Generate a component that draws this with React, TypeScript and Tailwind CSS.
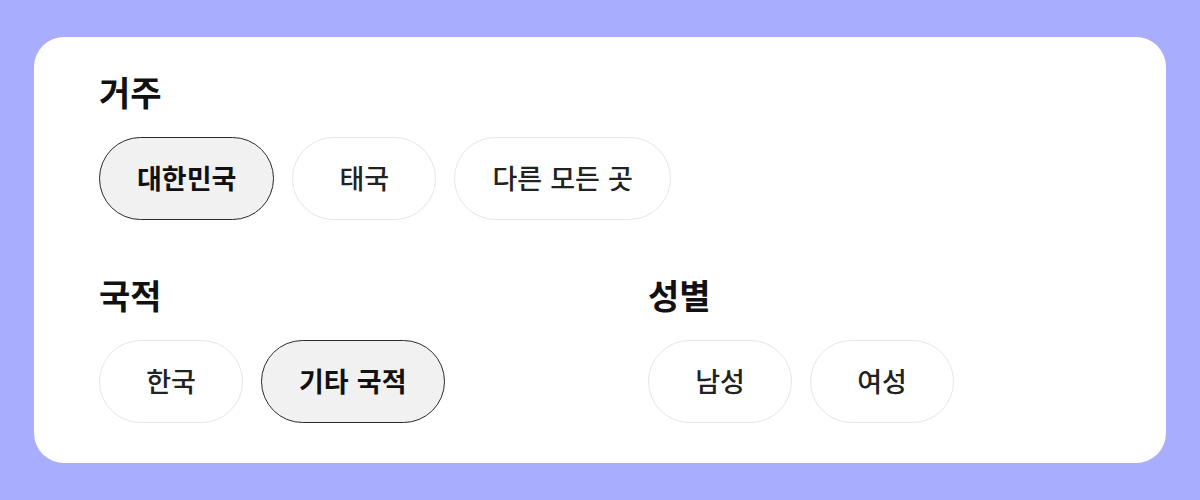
import React, { useState } from 'react';

const font = { fontFamily: '"Noto Sans CJK KR", "Noto Sans", sans-serif' };

function Chip({ label, selected, onClick }: { label: string; selected: boolean; onClick: () => void }) {
  return (
    <button
      onClick={onClick}
      className={
        selected
          ? 'h-[83px] min-w-[144px] px-[37px] rounded-full border-[1.5px] border-[#2a2a2a] bg-[#f1f1f1] text-[27px] font-bold text-[#111] [word-spacing:2px] flex items-center justify-center'
          : 'h-[83px] min-w-[144px] px-[37px] rounded-full border border-[#e6e6e6] bg-white text-[27px] font-medium text-[#222] [word-spacing:2px] flex items-center justify-center'
      }
    >
      {label}
    </button>
  );
}

function Group({
  title,
  options,
  value,
  onChange,
}: {
  title: string;
  options: string[];
  value: string;
  onChange: (v: string) => void;
}) {
  return (
    <div className="flex flex-col">
      <h2 className="text-[34px] leading-[40px] font-bold text-[#111]">{title}</h2>
      <div className="flex gap-[18px] mt-[25px]">
        {options.map((o) => (
          <Chip key={o} label={o} selected={o === value} onClick={() => onChange(o)} />
        ))}
      </div>
    </div>
  );
}

export default function App() {
  const [residence, setResidence] = useState('대한민국');
  const [nationality, setNationality] = useState('기타 국적');
  const [gender, setGender] = useState('');

  return (
    <div className="w-[1200px] h-[500px] bg-[#a9adfd] px-[34px] py-[37px]" style={font}>
      <div className="h-full bg-white rounded-[30px] px-[65px] pt-[35px] flex flex-col gap-[55px]">
        <Group title="거주" options={['대한민국', '태국', '다른 모든 곳']} value={residence} onChange={setResidence} />
        <div className="grid grid-cols-2 gap-x-24">
          <Group title="국적" options={['한국', '기타 국적']} value={nationality} onChange={setNationality} />
          <Group title="성별" options={['남성', '여성']} value={gender} onChange={setGender} />
        </div>
      </div>
    </div>
  );
}
